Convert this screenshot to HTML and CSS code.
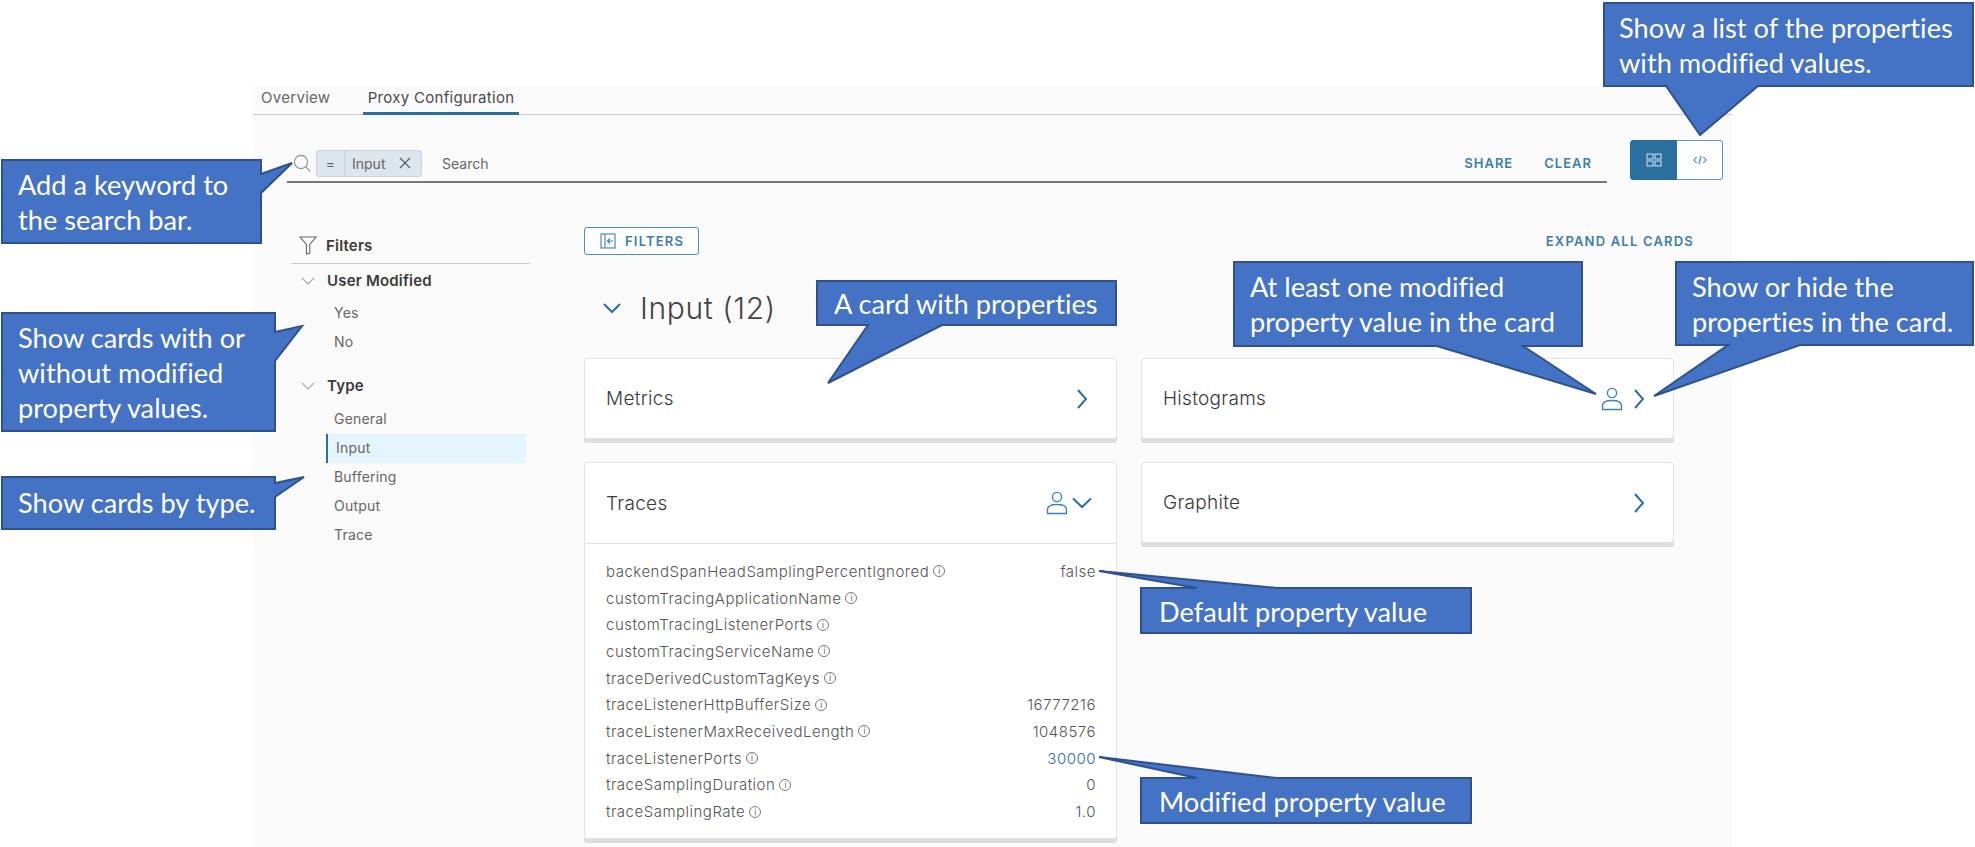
FILE: index.html
```html
<!DOCTYPE html>
<html lang="en">
<head>
  <meta charset="UTF-8">
  <title>Proxy Configuration</title>
  <link rel="stylesheet" href="styles.css">
</head>
<body>
  <div class="app">
    <nav class="tabs">
      <a class="tab">Overview</a>
      <a class="tab tab-active">Proxy Configuration</a>
    </nav>

    <div class="toolbar">
      <div class="search">
        <svg class="search-icon" width="20" height="20" viewBox="0 0 20 20" fill="none" stroke="#909090" stroke-width="1.1">
          <circle cx="9" cy="9" r="6.6"></circle>
          <path d="M13.8 13.8l4.4 4.6"></path>
        </svg>
        <span class="chip">
          <span class="chip-op">=</span>
          <span class="chip-label">Input</span>
          <svg width="12" height="12" viewBox="0 0 12 12" fill="none" stroke="#555" stroke-width="1.1"><path d="M1 1l10 10M11 1L1 11"></path></svg>
        </span>
        <span class="search-text">Search</span>
        <a class="link link-share">SHARE</a>
        <a class="link">CLEAR</a>
      </div>
      <div class="toggle">
        <span class="toggle-btn toggle-on">
          <svg width="16" height="14" viewBox="0 0 16 14" fill="none" stroke="#b5d3e6" stroke-width="1.2">
            <rect x="1" y="1" width="6" height="5"></rect><rect x="9" y="1" width="6" height="5"></rect>
            <rect x="1" y="8" width="6" height="5"></rect><rect x="9" y="8" width="6" height="5"></rect>
          </svg>
        </span>
        <span class="toggle-btn">
          <svg width="14" height="10" viewBox="0 0 14 10" fill="none" stroke="#3d82ad" stroke-width="1.1"><path d="M3.6 2L1 5l2.6 3M10.4 2L13 5l-2.6 3M8 1L6 9"></path></svg>
        </span>
      </div>
    </div>

    <div class="content">
      <aside class="sidebar">
        <div class="filters-head">
          <svg width="18" height="20" viewBox="0 0 18 20" fill="none" stroke="#666" stroke-width="1.1"><path d="M1 2h16l-6.200 7.500V18L7.500 19V9.500z"></path></svg>
          <span>Filters</span>
        </div>
        <div class="group">
          <div class="group-head">
            <svg class="caret" width="14" height="8" viewBox="0 0 14 8" fill="none" stroke="#aaa" stroke-width="1.2"><path d="M1 1l6 6 6-6"></path></svg>
            User Modified
          </div>
          <ul class="group-list">
            <li>Yes</li>
            <li>No</li>
          </ul>
        </div>
        <div class="group group-type">
          <div class="group-head">
            <svg class="caret" width="14" height="8" viewBox="0 0 14 8" fill="none" stroke="#aaa" stroke-width="1.2"><path d="M1 1l6 6 6-6"></path></svg>
            Type
          </div>
          <ul class="group-list">
            <li>General</li>
            <li class="selected">Input</li>
            <li>Buffering</li>
            <li>Output</li>
            <li>Trace</li>
          </ul>
        </div>
      </aside>

      <main class="main">
        <div class="main-top">
          <button class="filters-btn">
            <svg width="16" height="16" viewBox="0 0 16 16" fill="none" stroke="#3d82ad" stroke-width="1.1"><rect x="1" y="1" width="14" height="14"></rect><path d="M5 1v14M13 8H8M10 5.500L7.500 8l2.500 2.500"></path></svg>
            FILTERS
          </button>
          <a class="link expand">EXPAND ALL CARDS</a>
        </div>

        <h2 class="section-title">
          <svg width="18" height="11" viewBox="0 0 18 11" fill="none" stroke="#2a6f9e" stroke-width="2"><path d="M1 1l8 8 8-8"></path></svg>
          Input (12)
        </h2>

        <div class="cards">
          <div class="col">
            <section class="card">
              <header class="card-head">
                <span>Metrics</span>
                <svg class="chev" width="12" height="20" viewBox="0 0 12 20" fill="none" stroke="#2a6f9e" stroke-width="2"><path d="M2 1l8 9-8 9"></path></svg>
              </header>
            </section>
            <section class="card">
              <header class="card-head card-head-open">
                <span>Traces</span>
                <svg class="user" width="22" height="24" viewBox="0 0 22 24" fill="none" stroke="#3d82ad" stroke-width="1.4"><circle cx="11" cy="6" r="4.600"></circle><path d="M1.500 22.500v-4c0-3 3.500-5 9.500-5s9.500 2 9.500 5v4z"></path></svg>
                <svg class="chev-down" width="20" height="12" viewBox="0 0 20 12" fill="none" stroke="#2a6f9e" stroke-width="2"><path d="M1 1.500l9 8.500 9-8.500"></path></svg>
              </header>
              <div class="props">
                <div class="prop"><span>backendSpanHeadSamplingPercentIgnored</span><i class="info">i</i><b>false</b></div>
                <div class="prop"><span>customTracingApplicationName</span><i class="info">i</i><b></b></div>
                <div class="prop"><span>customTracingListenerPorts</span><i class="info">i</i><b></b></div>
                <div class="prop"><span>customTracingServiceName</span><i class="info">i</i><b></b></div>
                <div class="prop"><span>traceDerivedCustomTagKeys</span><i class="info">i</i><b></b></div>
                <div class="prop"><span>traceListenerHttpBufferSize</span><i class="info">i</i><b>16777216</b></div>
                <div class="prop"><span>traceListenerMaxReceivedLength</span><i class="info">i</i><b>1048576</b></div>
                <div class="prop"><span>traceListenerPorts</span><i class="info">i</i><b class="modified">30000</b></div>
                <div class="prop"><span>traceSamplingDuration</span><i class="info">i</i><b>0</b></div>
                <div class="prop"><span>traceSamplingRate</span><i class="info">i</i><b>1.0</b></div>
              </div>
            </section>
          </div>
          <div class="col">
            <section class="card">
              <header class="card-head">
                <span>Histograms</span>
                <svg class="user" width="22" height="24" viewBox="0 0 22 24" fill="none" stroke="#3d82ad" stroke-width="1.4"><circle cx="11" cy="6" r="4.600"></circle><path d="M1.500 22.500v-4c0-3 3.500-5 9.500-5s9.500 2 9.500 5v4z"></path></svg>
                <svg class="chev chev-after" width="12" height="20" viewBox="0 0 12 20" fill="none" stroke="#2a6f9e" stroke-width="2"><path d="M2 1l8 9-8 9"></path></svg>
              </header>
            </section>
            <section class="card">
              <header class="card-head">
                <span>Graphite</span>
                <svg class="chev" width="12" height="20" viewBox="0 0 12 20" fill="none" stroke="#2a6f9e" stroke-width="2"><path d="M2 1l8 9-8 9"></path></svg>
              </header>
            </section>
          </div>
        </div>
      </main>
    </div>
  </div>

  <!-- callout shapes drawn over the app -->
  <svg class="callout-shapes" width="1975" height="847" viewBox="0 0 1975 847">
    <polygon points="2,160 261,160 261,174 292,163 261,193 261,243 2,243"></polygon>
    <polygon points="2,313 275,313 275,332 302,326 275,361 275,431 2,431"></polygon>
    <polygon points="2,477 275,477 275,483 304,477 275,497 275,529 2,529"></polygon>
    <polygon points="817,281 1116,281 1116,325 942,325 828,383 868,325 817,325"></polygon>
    <polygon points="1234,262 1582,262 1582,346 1523,346 1596,394 1437,346 1234,346"></polygon>
    <polygon points="1676,262 1973,262 1973,345 1800,345 1654,396 1728,345 1676,345"></polygon>
    <polygon points="1604,3 1973,3 1973,86 1758,86 1700,135 1666,86 1604,86"></polygon>
    <polygon points="1141,588 1197,588 1099,571 1277,588 1471,588 1471,633 1141,633"></polygon>
    <polygon points="1141,778 1197,778 1099,757 1277,778 1471,778 1471,823 1141,823"></polygon>
  </svg>
  <div class="callout c-search">Add a keyword to<br>the search bar.</div>
  <div class="callout c-modified">Show cards with or<br>without modified<br>property values.</div>
  <div class="callout c-type">Show cards by type.</div>
  <div class="callout c-card">A card with properties</div>
  <div class="callout c-least">At least one modified<br>property value in the card</div>
  <div class="callout c-hide">Show or hide the<br>properties in the card.</div>
  <div class="callout c-list">Show a list of the properties<br>with modified values.</div>
  <div class="callout c-default">Default property value</div>
  <div class="callout c-mod-value">Modified property value</div>
</body>
</html>
```

FILE: styles.css
```css
:root {
  --blue: #2a6f9e;
  --link: #3d7fa8;
  --text: #666;
  --dark: #3a3a3a;
  --line: #ccc;
}

html, body {
  margin: 0;
  height: 847px;
  overflow: hidden;
  background: #fff;
}

body {
  font-family: Inter, "Noto Sans", sans-serif;
  color: var(--text);
  position: relative;
}

.app {
  margin: 86px 0 0 253px;
  width: 1479px;
  height: 761px;
  background: #fafafa;
  overflow: hidden;
}

.tabs {
  display: flex;
  height: 28px;
  border-bottom: 1px solid var(--line);
  padding-left: 8px;
  font-size: 15px;
  line-height: 23px;
  letter-spacing: 0.3px;
}

.tab {
  width: 102px;
}

.tab-active {
  width: 156px;
  height: 26px;
  box-sizing: content-box;
  text-align: center;
  white-space: nowrap;
  color: #4a4a4a;
  border-bottom: 3px solid var(--blue);
}

.toolbar {
  display: flex;
  align-items: flex-start;
  gap: 23px;
  padding: 25px 0 0 34px;
}

.search {
  display: flex;
  align-items: center;
  width: 1320px;
  height: 36px;
  padding-top: 5px;
  border-bottom: 2px solid #777;
  font-size: 12px;
}

.search-icon {
  margin-left: 5px;
}

.chip {
  display: flex;
  align-items: center;
  height: 25px;
  margin-left: 4px;
  width: 104px;
  background: #dde6ed;
  border: 1px solid #c8d2d9;
  border-radius: 3px;
  font-size: 14px;
}

.chip-op {
  width: 27px;
  height: 25px;
  line-height: 25px;
  text-align: center;
  border-right: 1px solid #c8d2d9;
}

.chip-label {
  margin: 0 11px 0 7px;
  width: 36px;
}

.search-text {
  margin-left: 20px;
  flex: 1;
  font-size: 14px;
}

.link {
  color: var(--link);
  font-size: 13px;
  font-weight: 600;
  letter-spacing: 1.2px;
}

.search .link {
  letter-spacing: 1px;
}

.link-share {
  margin-right: 31px;
}

.search .link:last-child {
  margin-right: 15px;
}

.toggle {
  display: flex;
  width: 93px;
  height: 40px;
}

.toggle-btn {
  flex: 1;
  display: flex;
  align-items: center;
  justify-content: center;
  background: #fff;
  border: 1px solid #5a9ac0;
  border-left: none;
  border-radius: 0 3px 3px 0;
}

.toggle-on {
  background: var(--blue);
  border: 1px solid var(--blue);
  border-radius: 3px 0 0 3px;
}

.content {
  display: flex;
}

.sidebar {
  width: 239px;
  margin-left: 38px;
  padding-top: 48px;
  font-size: 14px;
  letter-spacing: 0.2px;
}

.filters-head {
  display: flex;
  align-items: center;
  gap: 9px;
  height: 28px;
  padding: 0 0 4px 8px;
  border-bottom: 1px solid var(--line);
  font-size: 15px;
  font-weight: 600;
  color: var(--dark);
}

.group {
  margin-top: 2px;
}

.group-type {
  margin-top: 14px;
}

.group-head {
  display: flex;
  align-items: center;
  gap: 12px;
  height: 29px;
  padding-left: 10px;
  font-size: 15px;
  font-weight: 600;
  color: var(--dark);
}

.group-list {
  list-style: none;
  margin: 4px 0 0;
  padding: 0;
}

.group-type .group-list {
  margin-top: 5px;
}

.group-list li {
  height: 29px;
  line-height: 28px;
  padding-left: 43px;
}

.group-list .selected {
  margin: 0 4px 0 35px;
  padding-left: 8px;
  background: #e5f5fd;
  border-left: 2px solid var(--blue);
}

.main {
  margin-left: 54px;
  width: 1110px;
}

.main-top {
  display: flex;
  align-items: center;
  justify-content: space-between;
  margin-top: 44px;
}

.filters-btn {
  display: flex;
  align-items: center;
  gap: 9px;
  width: 115px;
  height: 28px;
  padding: 0 0 0 15px;
  background: #fff;
  border: 1px solid #4a90b8;
  border-radius: 3px;
  color: var(--link);
  font: 600 13px Inter, sans-serif;
  letter-spacing: 1.2px;
}

.section-title {
  display: flex;
  align-items: center;
  gap: 19px;
  margin: 30px 0 0;
  padding-left: 19px;
  height: 46px;
  font-size: 30px;
  font-weight: 300;
  letter-spacing: 0.6px;
  color: #444;
}

.cards {
  display: flex;
  gap: 24px;
  margin-top: 27px;
}

.col {
  display: flex;
  flex-direction: column;
  gap: 23px;
  width: 533px;
}

.card {
  background: #fff;
  border: 1px solid #e2e2e2;
  border-radius: 3px;
  box-shadow: 0 4px 0 #ddd;
}

.card-head {
  display: flex;
  align-items: center;
  height: 79px;
  padding: 0 28px 0 21px;
  font-size: 19px;
  font-weight: 300;
  letter-spacing: 0.3px;
  color: var(--dark);
}

.card-head span {
  flex: 1;
}

.card-head-open {
  height: 80px;
  border-bottom: 1px solid #e2e2e2;
  padding-right: 24px;
}

.user {
  margin-right: 4px;
}

.chev-after {
  margin-left: 6px;
}

.props {
  padding: 14px 20px 13px 21px;
  font-size: 15px;
  font-weight: 300;
  letter-spacing: 0.5px;
  color: #555;
}

.prop {
  display: flex;
  align-items: center;
  height: 26.7px;
}

.info {
  display: inline-block;
  width: 10px;
  height: 10px;
  margin-left: 4px;
  border: 1px solid #777;
  border-radius: 50%;
  font: normal 8px/10px Inter, sans-serif;
  letter-spacing: 0;
  text-align: center;
}

.prop b {
  flex: 1;
  font-weight: 300;
  text-align: right;
}

.prop .modified {
  color: var(--blue);
}

.callout-shapes {
  position: absolute;
  left: 0;
  top: 0;
}

.callout-shapes polygon {
  fill: #4472c4;
  stroke: #2f528f;
  stroke-width: 2;
}

.callout {
  position: absolute;
  font-family: Lato, sans-serif;
  font-size: 27.2px;
  line-height: 35px;
  color: #fff;
  white-space: nowrap;
  font-variant-ligatures: none;
}

.c-search { left: 18px; top: 167px; }
.c-modified { left: 18px; top: 320px; }
.c-type { left: 18px; top: 485px; }
.c-card { left: 834px; top: 286px; }
.c-least { left: 1250px; top: 269px; }
.c-hide { left: 1692px; top: 269px; }
.c-list { left: 1619px; top: 10px; }
.c-default { left: 1159px; top: 594px; }
.c-mod-value { left: 1159px; top: 784px; }
```
